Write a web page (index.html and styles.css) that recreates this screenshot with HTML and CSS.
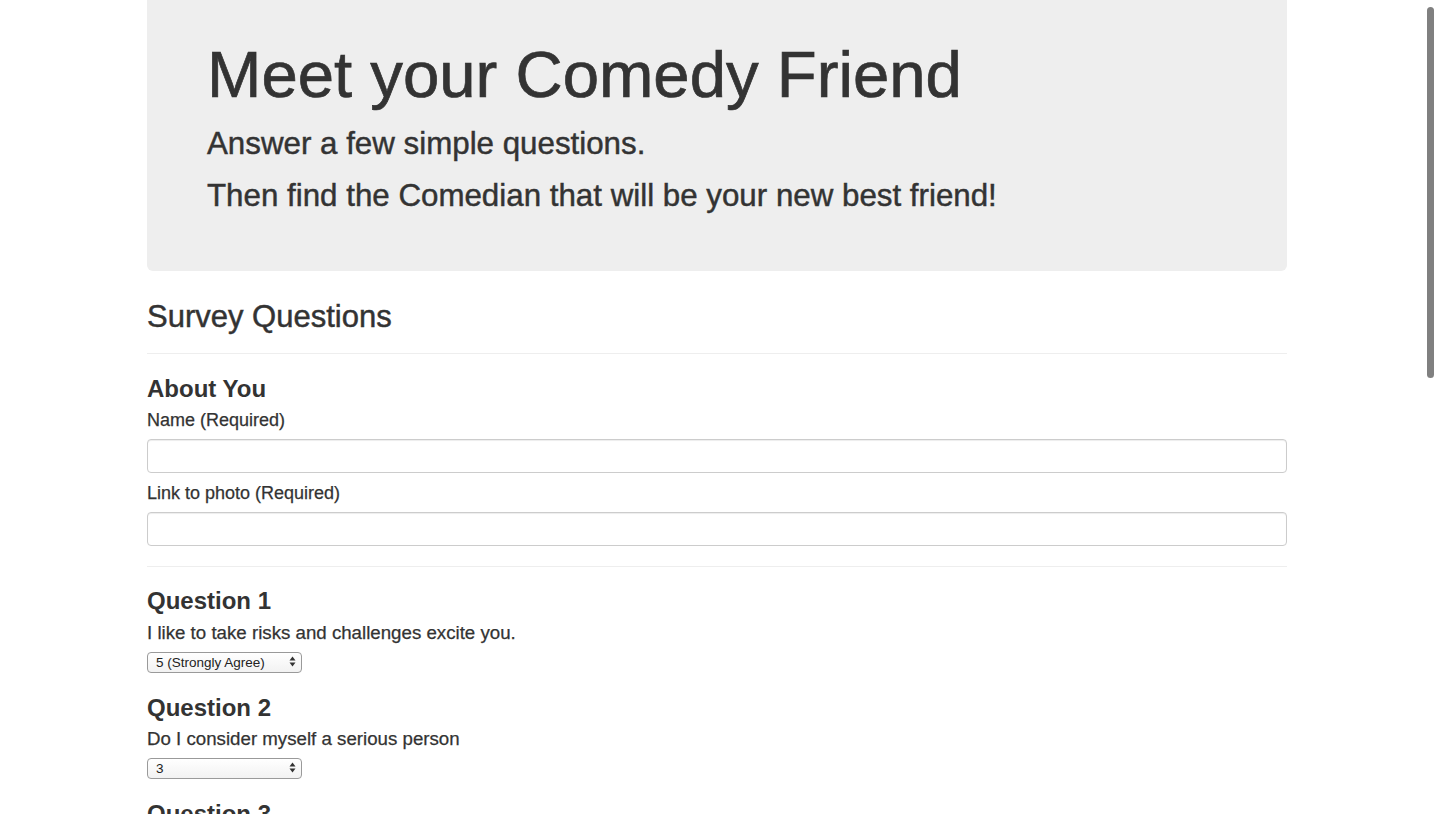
FILE: index.html
```html
<!DOCTYPE html>
<html lang="en">
<head>
<meta charset="utf-8">
<title>Meet your Comedy Friend</title>
<link rel="stylesheet" href="styles.css">
</head>
<body>
<div class="container">
  <div class="jumbotron">
    <h1 class="jumbo-title">Meet your Comedy Friend</h1>
    <h2 class="jumbo-line jumbo-first">Answer a few simple questions.</h2>
    <h2 class="jumbo-line jumbo-second">Then find the Comedian that will be your new best friend!</h2>
  </div>

  <div class="page-header">
    <h2 class="section-title">Survey Questions</h2>
  </div>

  <form class="survey">
    <h3 class="q-title">About You</h3>
    <label class="field-label" for="name">Name (Required)</label>
    <input class="form-control" id="name" type="text">
    <label class="field-label" for="photo">Link to photo (Required)</label>
    <input class="form-control" id="photo" type="text">

    <hr class="divider">

    <div class="question">
      <h3 class="q-title">Question 1</h3>
      <p class="q-text">I like to take risks and challenges excite you.</p>
      <div class="select-wrap">
        <select class="mini-select">
          <option>5 (Strongly Agree)</option>
        </select>
        <svg class="select-arrows" width="7" height="11" viewBox="0 0 7 11"><path d="M3.5 0.5 L6.5 4.5 L0.5 4.5 Z M3.5 10.5 L6.5 6.5 L0.5 6.5 Z" fill="#333"/></svg>
      </div>
    </div>

    <div class="question">
      <h3 class="q-title">Question 2</h3>
      <p class="q-text">Do I consider myself a serious person</p>
      <div class="select-wrap">
        <select class="mini-select">
          <option>3</option>
        </select>
        <svg class="select-arrows" width="7" height="11" viewBox="0 0 7 11"><path d="M3.5 0.5 L6.5 4.5 L0.5 4.5 Z M3.5 10.5 L6.5 6.5 L0.5 6.5 Z" fill="#333"/></svg>
      </div>
    </div>

    <div class="question">
      <h3 class="q-title">Question 3</h3>
      <p class="q-text">I enjoy making other people laugh</p>
      <div class="select-wrap">
        <select class="mini-select">
          <option>3</option>
        </select>
        <svg class="select-arrows" width="7" height="11" viewBox="0 0 7 11"><path d="M3.5 0.5 L6.5 4.5 L0.5 4.5 Z M3.5 10.5 L6.5 6.5 L0.5 6.5 Z" fill="#333"/></svg>
      </div>
    </div>
  </form>
</div>
<div class="scroll-thumb"></div>
</body>
</html>
```

FILE: styles.css
```css
html, body {
  height: 100%;
  overflow: hidden;
}

body {
  margin: 0;
  padding-right: 3px;
  background: #fff;
  color: #333;
  font-family: "Liberation Sans", Arial, sans-serif;
  font-size: 18px;
}

.container {
  width: 1140px;
  margin: 0 auto;
}

.jumbotron {
  background: #eeeeee;
  border-radius: 0 0 6px 6px;
  padding: 39px 60px 57px;
}

.jumbo-title {
  margin: 0;
  font-size: 65.3px;
  font-weight: normal;
  line-height: 1.1;
  -webkit-text-stroke: 0.7px #333;
}

.jumbo-line {
  margin: 0;
  font-size: 31.3px;
  font-weight: normal;
  line-height: 1.1;
  -webkit-text-stroke: 0.45px #333;
}

.jumbo-first {
  margin-top: 16px;
}

.jumbo-second {
  margin-top: 18px;
}

.page-header {
  margin-top: 29px;
  padding-bottom: 19px;
  border-bottom: 1px solid #eeeeee;
}

.section-title {
  margin: 0;
  font-size: 31px;
  font-weight: normal;
  line-height: 1.1;
  -webkit-text-stroke: 0.45px #333;
}

.survey {
  display: flex;
  flex-direction: column;
  align-items: flex-start;
  padding-top: 1px;
}

.q-title {
  margin: 21px 0 8px;
  font-size: 24px;
  font-weight: bold;
  line-height: 1.1;
}

.field-label {
  display: block;
  line-height: 20px;
  margin-bottom: 9px;
  -webkit-text-stroke: 0.25px #333;
}

.form-control {
  box-sizing: border-box;
  width: 100%;
  height: 34px;
  margin: 0 0 10px;
  padding: 6px 12px;
  border: 1px solid #cccccc;
  border-radius: 4px;
  box-shadow: inset 0 1px 1px rgba(0, 0, 0, 0.075);
  background: #fff;
  font: inherit;
}

.divider {
  align-self: stretch;
  margin: 10px 0 0;
  border: 0;
  border-top: 1px solid #eeeeee;
}

.question {
  display: flex;
  flex-direction: column;
  align-items: flex-start;
}

.q-text {
  margin: 0 0 8px;
  font-size: 18.7px;
  line-height: 20px;
  -webkit-text-stroke: 0.25px #333;
}

.select-wrap {
  position: relative;
  width: 155px;
  height: 21px;
  margin-bottom: 2px;
}

.mini-select {
  -webkit-appearance: none;
  appearance: none;
  box-sizing: border-box;
  width: 155px;
  height: 21px;
  margin: 0;
  padding: 0 0 0 8px;
  border: 1px solid #9a9a9a;
  border-radius: 4px;
  background: linear-gradient(#ffffff, #f2f2f2);
  color: #222;
  font-family: "Liberation Sans", Arial, sans-serif;
  font-size: 13.5px;
  line-height: 19px;
}

.select-arrows {
  position: absolute;
  right: 6px;
  top: 5px;
  pointer-events: none;
}

.scroll-thumb {
  position: fixed;
  top: 7px;
  right: 3px;
  width: 7px;
  height: 371px;
  border-radius: 4px;
  background: #808080;
}
```
